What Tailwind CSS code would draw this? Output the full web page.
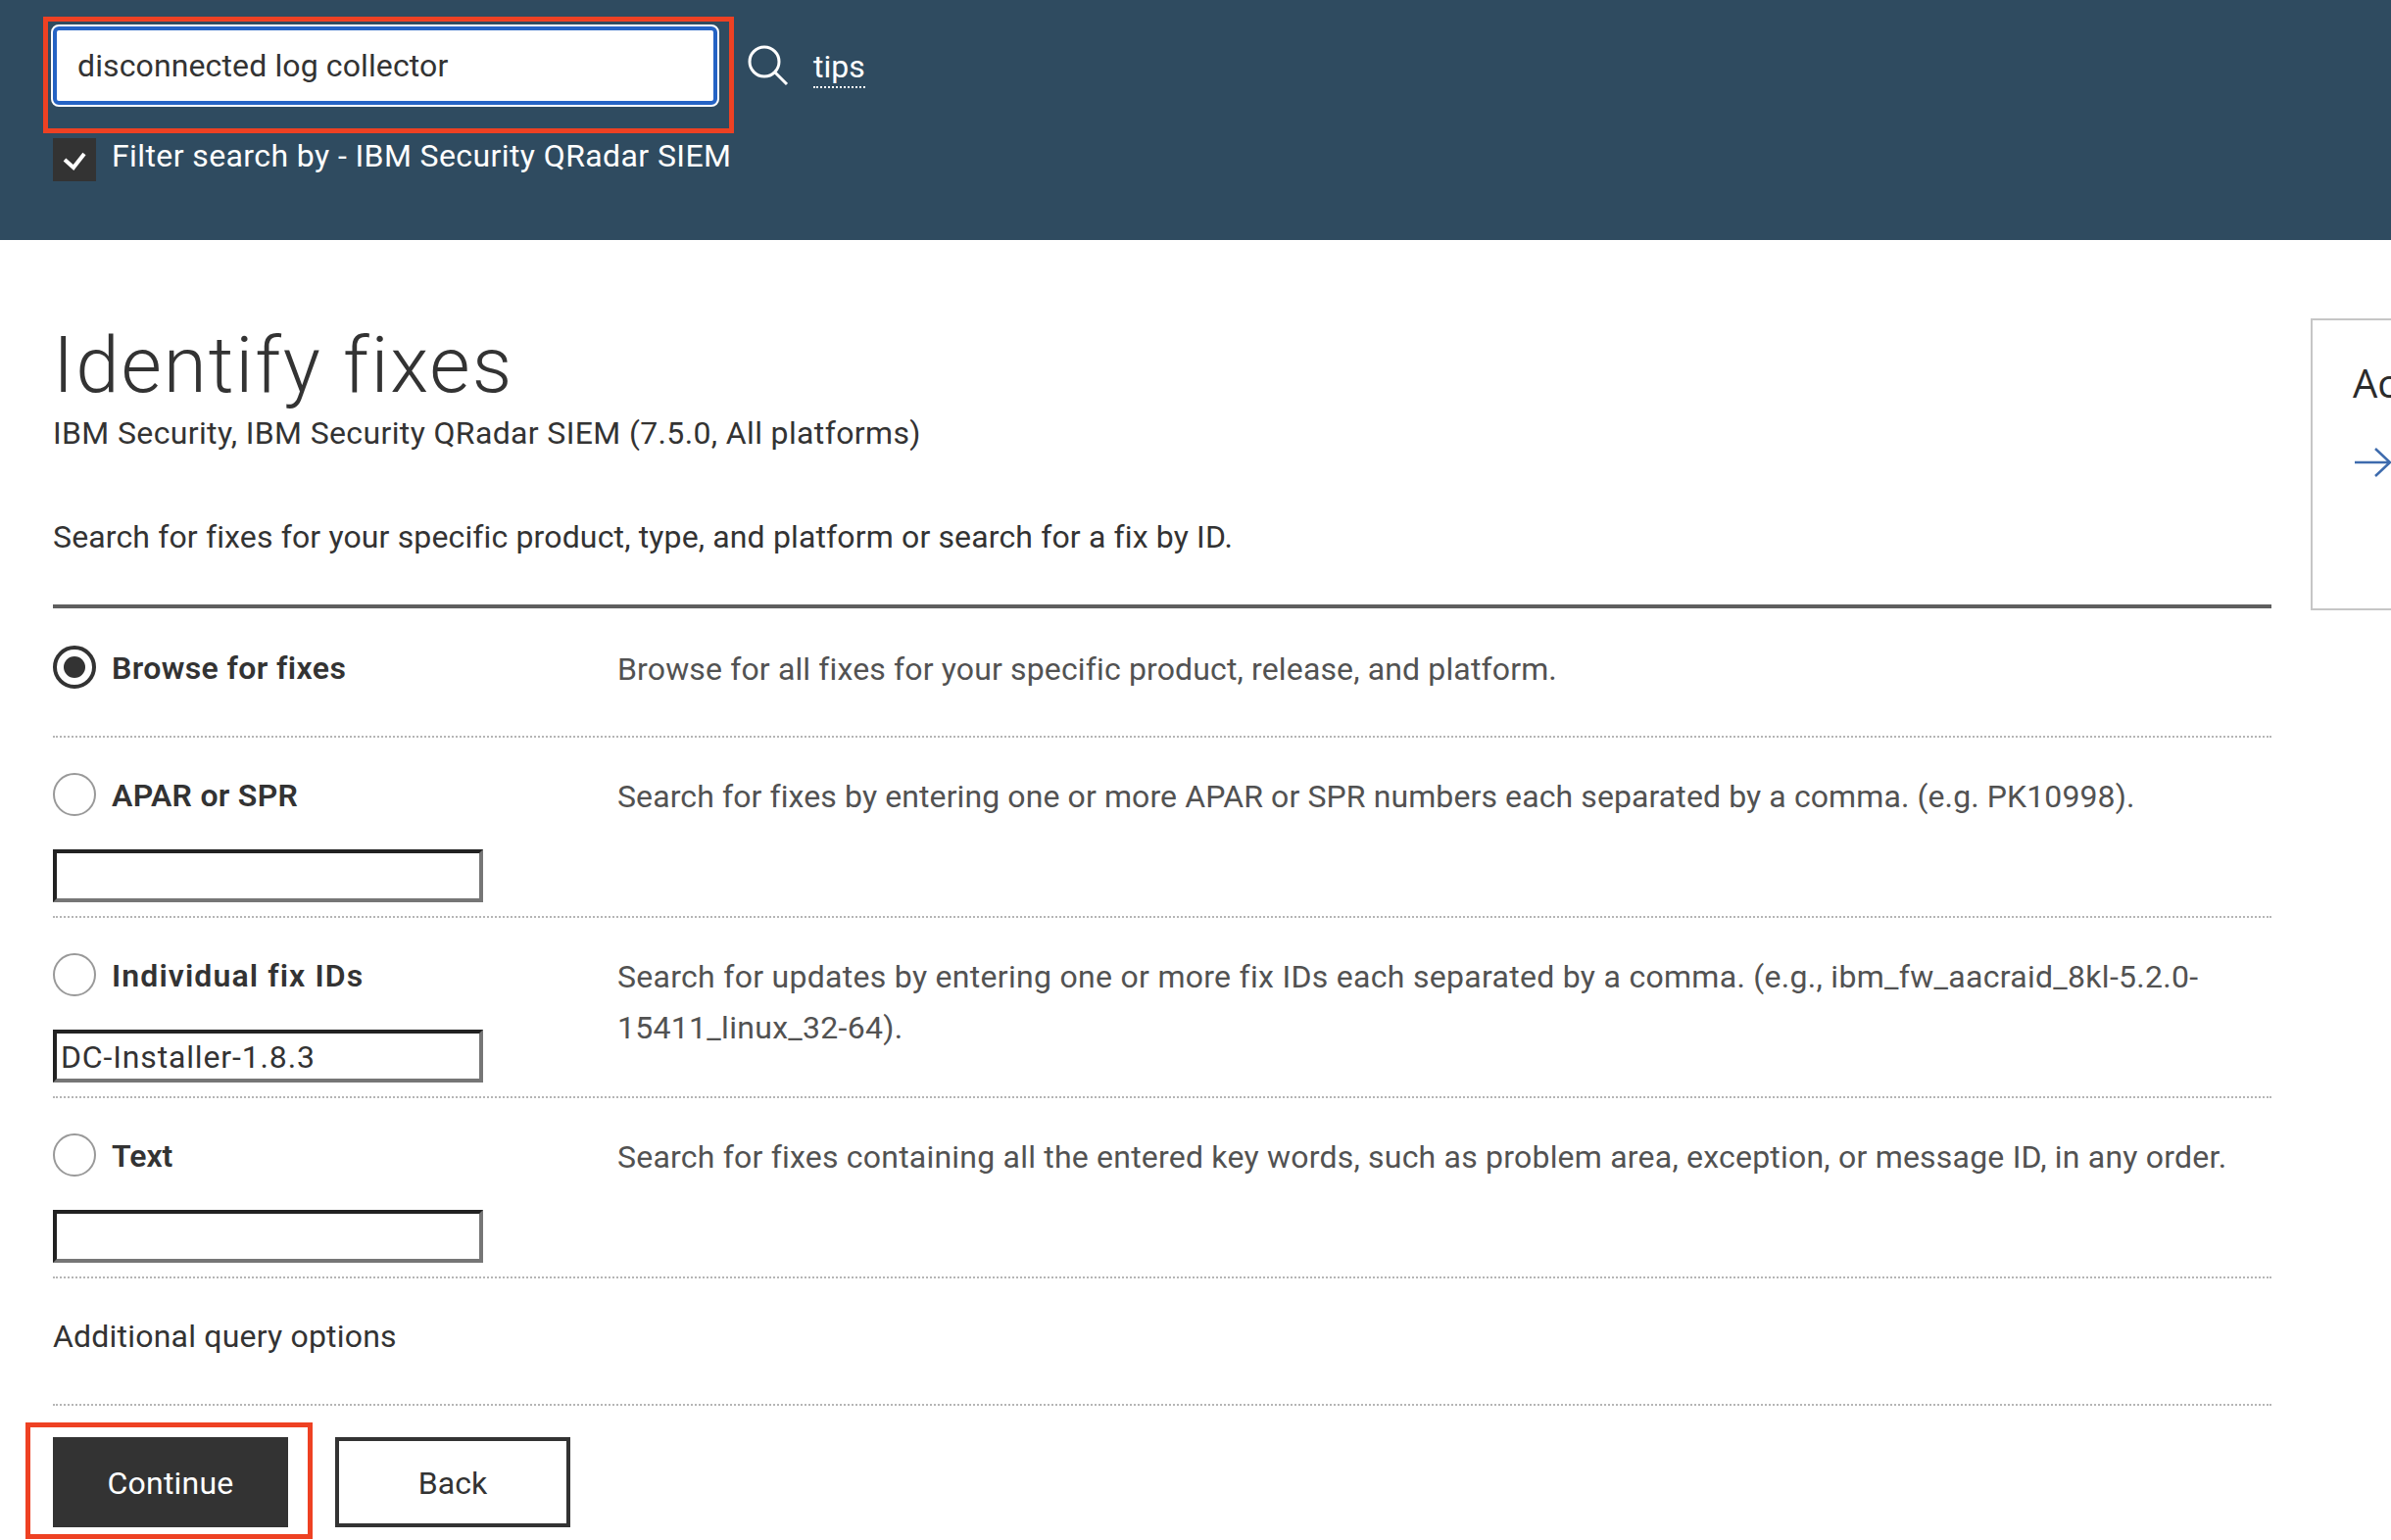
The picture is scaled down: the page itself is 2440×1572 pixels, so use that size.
<!DOCTYPE html>
<html lang="en">
<head>
    <meta charset="UTF-8">
    <meta name="viewport" content="width=device-width, initial-scale=1.0">
    <title>Identify fixes</title>
    <script src="https://cdn.jsdelivr.net/npm/@tailwindcss/browser@4"></script>
</head>
<body class="bg-white h-[1572px] overflow-hidden font-['Roboto',sans-serif] text-[32px] text-[#333333]">
    <!-- Search header -->
    <header class="bg-[#2f4b60] h-[245px] pl-[52px] pt-[25px]">
        <div class="flex items-center">
            <div class="relative w-[682px] h-[84px] rounded-[8px] border-[2px] border-white bg-white">
                <input type="text" value="disconnected log collector"
                    class="w-full h-full rounded-[6px] border-[4px] border-[#2563c4] bg-white pl-[21px] tracking-[0.12px] text-[#333333] outline-none">
                <div class="absolute -left-[10px] -right-[17px] -top-[10px] -bottom-[29px] border-[5px] border-[#ee4123]"></div>
            </div>
            <svg class="ml-[29px]" width="42" height="42" viewBox="0 0 42 42" fill="none" stroke="#ffffff" stroke-width="3">
                <circle cx="17" cy="17" r="15"/>
                <path d="M28 28 L40 40"/>
            </svg>
            <a href="#" class="ml-[25px] mt-[1px] pt-[2px] text-white border-b-[2px] border-dotted border-white leading-[40px]">tips</a>
        </div>
        <div class="flex items-start mt-[32px] ml-[2px]">
            <div class="w-[44px] h-[44px] bg-[#333333]">
                <svg width="44" height="44" viewBox="0 0 44 44" fill="none" stroke="#ffffff" stroke-width="4">
                    <path d="M12 22 L21 30 L32 16"/>
                </svg>
            </div>
            <label class="ml-[16px] text-white leading-[36px] tracking-[0.4px]">Filter search by - IBM Security QRadar SIEM</label>
        </div>
    </header>

    <div class="flex pl-[54px] gap-[40px]">
        <main class="w-[2264px] shrink-0">
            <h1 class="text-[80px] font-light leading-[96px] pt-[80px] tracking-[1.9px]">Identify fixes</h1>
            <p class="leading-[40px] mt-[1px] tracking-[0.36px]">IBM Security, IBM Security QRadar SIEM (7.5.0, All platforms)</p>
            <p class="leading-[40px] mt-[66px] tracking-[0.14px]">Search for fixes for your specific product, type, and platform or search for a fix by ID.</p>
            <div class="h-[4px] bg-[#5f5f5f] mt-[49px]"></div>

            <!-- Browse -->
            <div class="grid grid-cols-[576px_1fr] pt-[38px] pb-[42px] border-b-[2px] border-dotted border-[#b5b5b5]">
                <div class="flex items-center h-[44px]">
                    <span class="w-[44px] h-[44px] rounded-full border-[4px] border-[#333333] flex items-center justify-center">
                        <span class="w-[22px] h-[22px] rounded-full bg-[#333333]"></span>
                    </span>
                    <span class="ml-[16px] mt-[2px] font-semibold tracking-[0.4px]">Browse for fixes</span>
                </div>
                <p class="text-[#525252] leading-[52px] -mt-[2px] tracking-[0.14px]">Browse for all fixes for your specific product, release, and platform.</p>
            </div>

            <!-- APAR -->
            <div class="grid grid-cols-[576px_1fr] pt-[36px] pb-[14px] border-b-[2px] border-dotted border-[#b5b5b5]">
                <div>
                    <div class="flex items-center h-[44px]">
                        <span class="w-[44px] h-[44px] rounded-full border-[2px] border-[#999999]"></span>
                        <span class="ml-[16px] mt-[2px] font-semibold tracking-[0.28px]">APAR or SPR</span>
                    </div>
                    <input type="text" class="block mt-[34px] w-[439px] h-[54px] border-[4px] border-t-[#222222] border-l-[#222222] border-b-[#767676] border-r-[#767676] outline-none pl-[5px]">
                </div>
                <p class="text-[#525252] leading-[52px] -mt-[2px] tracking-[0.1px]">Search for fixes by entering one or more APAR or SPR numbers each separated by a comma. (e.g. PK10998).</p>
            </div>

            <!-- Fix IDs -->
            <div class="grid grid-cols-[576px_1fr] pt-[36px] pb-[14px] border-b-[2px] border-dotted border-[#b5b5b5]">
                <div>
                    <div class="flex items-center h-[44px]">
                        <span class="w-[44px] h-[44px] rounded-full border-[2px] border-[#999999]"></span>
                        <span class="ml-[16px] mt-[2px] font-semibold tracking-[1.1px]">Individual fix IDs</span>
                    </div>
                    <input type="text" value="DC-Installer-1.8.3" class="block mt-[34px] w-[439px] h-[54px] border-[4px] border-t-[#222222] border-l-[#222222] border-b-[#767676] border-r-[#767676] outline-none pl-[4px] pt-[2px] tracking-[0.85px]">
                </div>
                <p class="text-[#525252] leading-[52px] -mt-[2px] tracking-[0.29px]">Search for updates by entering one or more fix IDs each separated by a comma. (e.g., ibm_fw_aacraid_8kl-5.2.0-15411_linux_32-64).</p>
            </div>

            <!-- Text -->
            <div class="grid grid-cols-[576px_1fr] pt-[36px] pb-[14px] border-b-[2px] border-dotted border-[#b5b5b5]">
                <div>
                    <div class="flex items-center h-[44px]">
                        <span class="w-[44px] h-[44px] rounded-full border-[2px] border-[#999999]"></span>
                        <span class="ml-[16px] mt-[2px] font-semibold">Text</span>
                    </div>
                    <input type="text" class="block mt-[34px] w-[439px] h-[54px] border-[4px] border-t-[#222222] border-l-[#222222] border-b-[#767676] border-r-[#767676] outline-none pl-[5px]">
                </div>
                <p class="text-[#525252] leading-[52px] -mt-[2px] tracking-[0.21px]">Search for fixes containing all the entered key words, such as problem area, exception, or message ID, in any order.</p>
            </div>

            <!-- Additional -->
            <div class="h-[130px] pb-[10px] flex items-center border-b-[2px] border-dotted border-[#b5b5b5] tracking-[0.2px]">Additional query options</div>

            <div class="flex gap-[48px] mt-[32px]">
                <div class="relative">
                    <button class="w-[240px] h-[92px] pt-[2px] bg-[#333333] text-white tracking-[0.2px]">Continue</button>
                    <div class="absolute -left-[28px] -right-[25px] -top-[15px] -bottom-[12px] border-[5px] border-[#ee4123]"></div>
                </div>
                <button class="w-[240px] h-[92px] pt-[2px] border-[4px] border-[#333333] text-[#333333]">Back</button>
            </div>
        </main>

        <!-- Side card, cut off by the window -->
        <aside class="mt-[80px] w-[400px] h-[298px] shrink-0 border-[2px] border-[#c6c6c6] pl-[41px] pt-[39px]">
            <div class="text-[40px] leading-[50px] font-['Open_Sans',sans-serif] text-[#2b2b2b]">Ac</div>
            <svg class="mt-[40px]" width="44" height="32" viewBox="0 0 44 32" fill="none" stroke="#3e6bad" stroke-width="2.5">
                <path d="M2 16 H38 M23 2 L38 16 L23 30"/>
            </svg>
        </aside>
    </div>
</body>
</html>
